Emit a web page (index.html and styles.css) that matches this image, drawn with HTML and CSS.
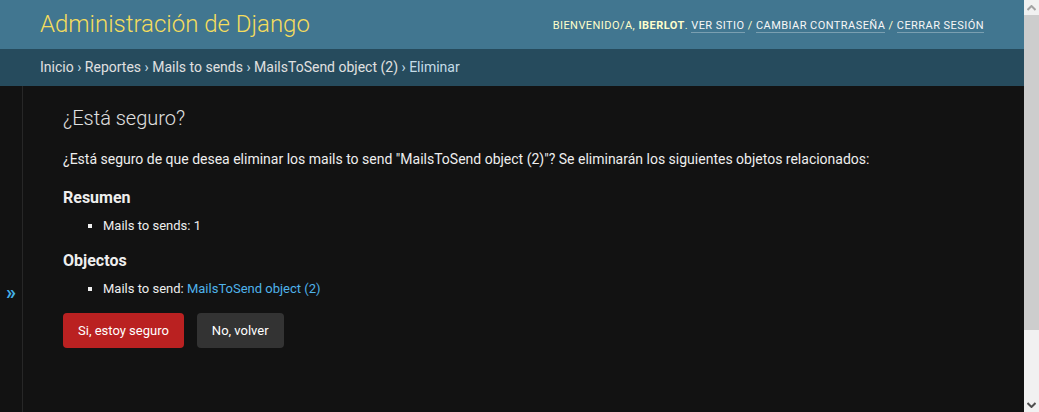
FILE: index.html
```html
<!DOCTYPE html>
<html lang="es">
<head>
<meta charset="utf-8">
<title>¿Está seguro? | Administración de Django</title>
<link rel="stylesheet" href="styles.css">
</head>
<body>
<div class="viewport">
<div class="container">
  <header class="header">
    <div class="branding"><h1 class="site-name">Administración de Django</h1></div>
    <div class="user-tools">
      Bienvenido/a, <strong>iberlot</strong>.
      <a href="#">Ver sitio</a> /
      <a href="#">Cambiar contraseña</a> /
      <a href="#">Cerrar sesión</a>
    </div>
  </header>
  <div class="breadcrumbs">
    <a href="#">Inicio</a> › <a href="#">Reportes</a> › <a href="#">Mails to sends</a> › <a href="#">MailsToSend object (2)</a> › Eliminar
  </div>
  <div class="main">
    <button class="toggle-nav" type="button" aria-label="Toggle navigation">»</button>
    <div class="content">
      <h1 class="title">¿Está seguro?</h1>
      <p class="intro">¿Está seguro de que desea eliminar los mails to send "MailsToSend object (2)"? Se eliminarán los siguientes objetos relacionados:</p>
      <h2 class="section">Resumen</h2>
      <ul class="list">
        <li>Mails to sends: 1</li>
      </ul>
      <h2 class="section">Objectos</h2>
      <ul class="list">
        <li>Mails to send: <a href="#" class="link">MailsToSend object (2)</a></li>
      </ul>
      <form class="actions">
        <button type="button" class="btn btn-delete">Si, estoy seguro</button>
        <a href="#" class="btn btn-cancel">No, volver</a>
      </form>
    </div>
  </div>
</div>
<div class="scrollbar" aria-hidden="true">
  <div class="sb-arrow">
    <svg width="9" height="6" viewBox="0 0 9 6"><path d="M0.5 5 L4.5 1 L8.5 5" fill="none" stroke="#a3a3a3" stroke-width="2"/></svg>
  </div>
  <div class="sb-track"><div class="sb-thumb"></div></div>
  <div class="sb-arrow">
    <svg width="9" height="6" viewBox="0 0 9 6"><path d="M0.5 1 L4.5 5 L8.5 1" fill="none" stroke="#505050" stroke-width="2"/></svg>
  </div>
</div>
</div>
</body>
</html>
```
FILE: styles.css
```css
html, body {
  margin: 0;
  padding: 0;
}
body {
  background: #121212;
  color: #eeeeee;
  font-family: Roboto, "Liberation Sans", sans-serif;
  font-size: 14px;
}
a {
  text-decoration: none;
}
.viewport {
  display: flex;
  height: 100vh;
  overflow: hidden;
}
.container {
  flex: 1;
  display: flex;
  flex-direction: column;
  min-width: 0;
}
.header {
  display: flex;
  justify-content: space-between;
  align-items: center;
  padding: 10px 40px;
  height: 29px;
  flex: 0 0 auto;
  background: #417690;
  color: #ffffcc;
}
.site-name {
  margin: 0;
  font-size: 24px;
  font-weight: 300;
  color: #f5dd5d;
  line-height: 29px;
}
.user-tools {
  font-size: 11px;
  font-weight: 400;
  letter-spacing: 0.45px;
  text-transform: uppercase;
  color: #ffffcc;
  padding-top: 1px;
}
.user-tools strong {
  font-weight: 700;
}
.user-tools a {
  color: #f7f7f7;
  border-bottom: 1px solid rgba(255, 255, 255, 0.3);
}
.breadcrumbs {
  flex: 0 0 auto;
  background: #264b5d;
  padding: 10px 40px;
  height: 17px;
  line-height: 17px;
  color: #c4dce8;
  font-size: 14px;
}
.breadcrumbs a {
  color: #e0e0e0;
}
.main {
  display: flex;
  flex: 0 0 412px;
}
.toggle-nav {
  flex: 0 0 23px;
  width: 23px;
  padding: 0;
  border: 0;
  border-right: 1px solid #272727;
  background: #121212;
  color: #44b0e8;
  font-size: 20px;
  font-family: Roboto, "Liberation Sans", sans-serif;
  font-weight: 700;
  cursor: pointer;
}
.content {
  flex: 1;
  padding: 20px 40px;
}
.title {
  margin: 0 0 20px;
  font-size: 20px;
  font-weight: 300;
  color: #e0e0e0;
  line-height: 24px;
}
.intro {
  margin: 0 0 18px;
  line-height: 19.6px;
}
.section {
  margin: 0 0 8px;
  font-size: 16px;
  font-weight: 700;
  line-height: 19px;
}
.list {
  margin: 0 0 14px 24px;
  padding: 0 0 0 16px;
}
.list li {
  list-style-type: square;
  font-size: 13px;
  line-height: 20px;
  padding: 1px 0;
}
.link {
  color: #4fb3ea;
}
.actions {
  display: flex;
  gap: 13px;
  margin-top: -1px;
}
.btn {
  display: inline-block;
  height: 15px;
  line-height: 15px;
  padding: 10px 15px;
  border: 0;
  border-radius: 4px;
  font-family: Roboto, "Liberation Sans", sans-serif;
  font-size: 13px;
  color: #ffffff;
  cursor: pointer;
}
.btn-delete {
  box-sizing: content-box;
  background: #ba2121;
}
.btn-cancel {
  background: #333333;
}
.scrollbar {
  flex: 0 0 15px;
  width: 15px;
  display: flex;
  flex-direction: column;
  background: #f1f1f1;
}
.sb-arrow {
  flex: 0 0 15px;
  height: 15px;
  display: flex;
  align-items: center;
  justify-content: center;
}
.sb-track {
  flex: 1;
}
.sb-thumb {
  height: 315px;
  margin: 0 0 0 0;
  background: #cdcdcd;
}
```
